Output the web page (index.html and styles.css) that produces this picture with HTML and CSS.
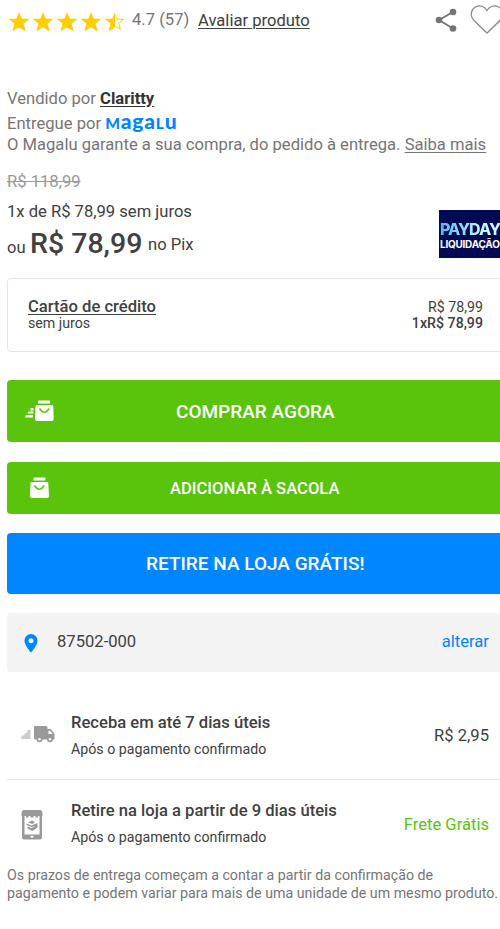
FILE: index.html
```html
<!DOCTYPE html>
<html lang="pt-BR">
<head>
<meta charset="utf-8">
<meta name="viewport" content="width=device-width, initial-scale=1">
<title>Claritty - Magalu</title>
<link rel="stylesheet" href="styles.css">
</head>
<body>
<svg class="defs" aria-hidden="true">
  <symbol id="star" viewBox="0 0 22 22"><path d="M11 1 13.700 7.800H21.500l-6 5L17.700 20.500 11 16.200l-6.700 4.300 2.200-7.700L.5 7.800h7.800z"/></symbol>
</svg>
<main class="page">
  <header class="rating">
    <div class="stars">
      <svg><use href="#star"/></svg><svg><use href="#star"/></svg><svg><use href="#star"/></svg><svg><use href="#star"/></svg>
      <svg viewBox="0 0 22 22"><path d="M11 1v15.200l-6.700 4.300 2.200-7.700L.5 7.800h7.800z"/><path class="half" d="M11.500 3.500 13 8.300h6.500l-4.800 4 1.700 6-4.900-3"/></svg>
    </div>
    <span class="score">4.7 (57)</span>
    <a class="review">Avaliar produto</a>
    <svg class="share" viewBox="0 0 22 24"><path d="M18 4 4 12l14 8.500" fill="none" stroke="#757575" stroke-width="1.800"/><circle cx="18" cy="4" r="3.300"/><circle cx="4" cy="12" r="3.300"/><circle cx="18" cy="20.500" r="3.300"/></svg>
    <svg class="heart" viewBox="0 0 34 30"><path d="M17 28 3.500 15C-.5 10.500 1.300 4 5.500 2 10-.2 14.500 1.500 17 5.500 19.500 1.500 24-.2 28.500 2c4.200 2 6 8.500 2 13z"/></svg>
  </header>

  <section class="seller">
    <p class="sold">Vendido por <a>Claritty</a></p>
    <p class="shipped">Entregue por <span class="logo"><small>M</small>aga<small>L</small>u</span></p>
    <p class="warranty">O Magalu garante a sua compra, do pedido à entrega. <a>Saiba mais</a></p>
  </section>

  <section class="price">
    <div class="values">
      <p class="old">R$ 118,99</p>
      <p class="parcel">1x de R$ 78,99 sem juros</p>
      <p class="cash"><span class="or">ou</span><strong>R$ 78,99</strong><span class="pix">no Pix</span></p>
    </div>
    <div class="payday"><b>PAYDAY</b><span>LIQUIDAÇÃO</span></div>
  </section>

  <section class="card">
    <div><a class="credit">Cartão de crédito</a><p class="free">sem juros</p></div>
    <div class="amounts"><p>R$ 78,99</p><p class="total">1xR$ 78,99</p></div>
  </section>

  <button class="btn buy">
    <svg viewBox="0 0 30 22"><path d="M14 .5h10q1 0 1 1v2H13v-2q0-1 1-1zM12 5h15q1.300 0 1.300 1.300L28.700 19q0 2-2 2H12q-2 0-2-2l.5-12.700Q10.600 5 12 5zM5.500 8h3v2.500h-3zM3 11.500h5.500v2H2.500zM1 15h7v2.500H0z"/><path class="smile" d="M14.500 8.500q4.700 7.500 9.700 0"/></svg>
    <span>COMPRAR AGORA</span>
  </button>
  <button class="btn bag">
    <svg viewBox="0 0 30 22"><path d="M9.500.500h10q1 0 1 1v2h-12v-2q0-1 1-1zM7 5h15q1.300 0 1.300 1.300L24 19q0 2-2 2H7q-2 0-2-2l.5-12.700Q5.600 5 7 5z"/><path class="smile" d="M9.500 8.500q4.700 7.500 9.700 0"/></svg>
    <span>ADICIONAR À SACOLA</span>
  </button>
  <button class="btn store"><span>RETIRE NA LOJA GRÁTIS!</span></button>

  <section class="zip">
    <svg viewBox="0 0 14 19"><path fill-rule="evenodd" d="M7 0a6.500 6.500 0 0 1 6.500 6.700C13.500 11.500 7 18.500 7 18.500S.5 11.500.5 6.700A6.500 6.500 0 0 1 7 0zm0 4.200a2.500 2.500 0 1 0 0 5 2.500 2.500 0 0 0 0-5z"/></svg>
    <span class="code">87502-000</span>
    <a>alterar</a>
  </section>

  <section class="option delivery">
    <svg viewBox="0 0 36 18"><path fill="#ccc" d="M6.500 5H9.500v9H0l1-3.500h2L4 8h2z"/><path d="M14 1h11q1.500 0 1.500 1.500V4H29q1 0 2 1.500l2.500 3.500v5.500H14.500q-1.500 0-1.500-1.500V2q0-1 1-1z"/><path fill="#fff" d="M27.500 5.800h1.700l2.300 3.200h-4z"/><circle cx="18.500" cy="14.300" r="3"/><circle cx="29" cy="14.300" r="3"/><g fill="#fff"><circle cx="18.500" cy="14.300" r="1.300"/><circle cx="29" cy="14.300" r="1.300"/></g></svg>
    <div><h2>Receba em até 7 dias úteis</h2><p>Após o pagamento confirmado</p></div>
    <span class="fee">R$ 2,95</span>
  </section>
  <section class="option pickup">
    <svg viewBox="0 0 24 32"><path fill-rule="evenodd" d="M4 1h16q2 0 2.500 3v3H22v21.500q0 2-2 2H4q-2 0-2-2V7h-.5V4Q2 1 4 1zM4.500 7v18.500h15V7z"/><path d="M6 7h2.500v1.500H6zm4.500 0h3v1.500h-3zm5 0H18v1.500h-2.500z"/><path d="m12 11.500 3 1.500-2.500 2-4.500-1.500zM6.500 14.500l5 2 6-2.500v4.500L12.500 22l-5-2.500 0-2 4 1.500 4-2-4 1-5-2z"/><path fill="#fff" d="M10.500 26.800h3v1.700h-3z"/></svg>
    <div><h2>Retire na loja a partir de 9 dias úteis</h2><p>Após o pagamento confirmado</p></div>
    <span class="fee green">Frete Grátis</span>
  </section>

  <footer><p>Os prazos de entrega começam a contar a partir da confirmação de</p><p>pagamento e podem variar para mais de uma unidade de um mesmo produto.</p></footer>
</main>
</body>
</html>
```
FILE: styles.css
```css
* { box-sizing: border-box; }
body { margin: 0; background: #fff; font-family: Roboto, sans-serif; font-size: 16.6px; color: #404040; overflow: hidden; }
p, h2 { margin: 0; white-space: nowrap; }
a { text-decoration: underline; text-underline-offset: 2px; white-space: nowrap; }
svg { flex: none; display: block; }
.defs { position: absolute; width: 0; height: 0; }
.page { width: 510px; height: 929px; padding-left: 7px; }

.rating { display: flex; height: 42px; }
.stars { display: flex; gap: 2px; padding: 10.500px 0 0 1px; fill: #ffce00; width: 125px; }
.stars svg { width: 22px; height: 22px; }
.half { fill: none; stroke: #ffce00; stroke-width: 1; }
.score { width: 66px; line-height: 40px; color: #757575; white-space: nowrap; }
.review { width: 237px; line-height: 42px; }
.share { width: 22px; height: 24px; margin-top: 8px; fill: #757575; }
.heart { width: 34px; height: 30px; margin: 5px 0 0 13px; fill: none; stroke: #8a8a8a; stroke-width: 1.3; }

.seller { padding-top: 45px; height: 128px; color: #757575; }
.seller p { height: 24px; line-height: 24px; }
.seller .shipped { height: 23px; line-height: 22px; }
.seller .warranty { line-height: 22px; }
.sold a { color: #333; font-weight: 700; }
.logo { color: #0086ff; font: 900 21px/20px Lato, sans-serif; letter-spacing: .8px; }
.logo small { font-size: 15.500px; }

.price { display: flex; justify-content: space-between; height: 108px; width: 500px; }
.old { color: #999; text-decoration: line-through; line-height: 24px; }
.parcel { line-height: 24px; margin-top: 6px; }
.cash { display: flex; height: 36px; margin-top: 4px; }
.or { width: 23px; line-height: 40px; }
.cash strong { width: 118px; font-size: 28.500px; line-height: 32px; font-weight: 500; }
.pix { line-height: 33px; }
.payday { width: 68px; height: 48px; margin-top: 40px; padding: 9px 0 0 1px; background: #000a54; color: #fff; font-family: Inter, sans-serif; overflow: hidden; }
.payday b { display: block; width: 60px; font-size: 16px; line-height: 20px; font-weight: 800; letter-spacing: -1px; background: linear-gradient(90deg, #55b4f5, #c9f7ff 70%); background-clip: text; color: transparent; }
.payday span { display: block; font-size: 10px; line-height: 10px; font-weight: 700; letter-spacing: -.25px; }

.card { display: flex; justify-content: space-between; height: 74px; padding: 19px 26px 0 20px; border: 1px solid #e5e5e5; border-radius: 4px; font-size: 14.200px; }
.credit { display: block; font-size: 16.600px; line-height: 18px; font-weight: 500; }
.free { line-height: 15px; }
.amounts { text-align: right; padding-top: 1px; line-height: 16px; }
.total { font-weight: 500; }

.btn { display: flex; align-items: center; width: 100%; padding: 0; border: 0; border-radius: 4px; color: #fff; font: 500 19px Roboto, sans-serif; background: #5ac40d; fill: #fff; white-space: nowrap; }
.btn svg { width: 30px; height: 22px; margin-left: 18px; }
.buy { height: 62px; margin-top: 28px; }
.buy span { margin-left: 121px; }
.bag { height: 52px; margin-top: 20px; font-size: 16.600px; }
.bag span { margin-left: 115px; }
.store { height: 61px; margin-top: 19px; background: #0086ff; }
.store span { margin-left: 139px; }
.smile { fill: none; stroke: #5ac40d; stroke-width: 1.5; }

.zip { display: flex; align-items: center; height: 59px; margin-top: 19px; padding: 0 21px 2px 17px; background: #f3f3f3; border-radius: 4px 0 0 4px; }
.zip svg { width: 14px; height: 19px; fill: #0086ff; margin-top: 3px; }
.code { margin-left: 19px; flex: 1; }
.zip a { color: #0086ff; text-decoration: none; }

.option { display: flex; }
.option svg { fill: #999; }
.option div { flex: 1; }
.option h2 { font-size: 16.600px; font-weight: 500; line-height: 26px; }
.option p { font-size: 14.200px; line-height: 26px; }
.fee { padding-right: 21px; }
.delivery { height: 108px; padding-top: 38px; border-bottom: 1px solid #e5e5e5; }
.delivery svg { width: 36px; height: 18px; margin: 15px 14px 0 14px; }
.delivery .fee { line-height: 51px; }
.pickup { height: 86px; padding-top: 18px; }
.pickup svg { width: 24px; height: 32px; margin: 11px 27px 0 13px; }
.pickup .fee { line-height: 53px; }
.green { color: #5ac40d; }
footer { color: #757575; font-size: 14.220px; line-height: 18px; }
```
